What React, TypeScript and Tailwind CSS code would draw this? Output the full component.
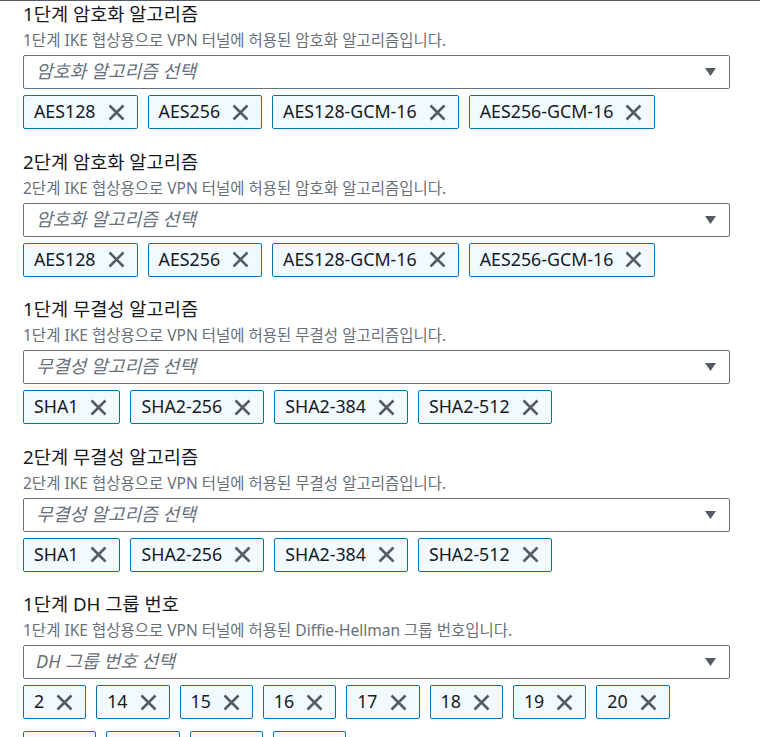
const font = { fontFamily: '"Noto Sans", "Noto Sans CJK KR", sans-serif' }

type Section = {
  title: string
  desc: string
  placeholder: string
  tokens: string[]
}

const sections: Section[] = [
  {
    title: '1단계 암호화 알고리즘',
    desc: '1단계 IKE 협상용으로 VPN 터널에 허용된 암호화 알고리즘입니다.',
    placeholder: '암호화 알고리즘 선택',
    tokens: ['AES128', 'AES256', 'AES128-GCM-16', 'AES256-GCM-16'],
  },
  {
    title: '2단계 암호화 알고리즘',
    desc: '2단계 IKE 협상용으로 VPN 터널에 허용된 암호화 알고리즘입니다.',
    placeholder: '암호화 알고리즘 선택',
    tokens: ['AES128', 'AES256', 'AES128-GCM-16', 'AES256-GCM-16'],
  },
  {
    title: '1단계 무결성 알고리즘',
    desc: '1단계 IKE 협상용으로 VPN 터널에 허용된 무결성 알고리즘입니다.',
    placeholder: '무결성 알고리즘 선택',
    tokens: ['SHA1', 'SHA2-256', 'SHA2-384', 'SHA2-512'],
  },
  {
    title: '2단계 무결성 알고리즘',
    desc: '2단계 IKE 협상용으로 VPN 터널에 허용된 무결성 알고리즘입니다.',
    placeholder: '무결성 알고리즘 선택',
    tokens: ['SHA1', 'SHA2-256', 'SHA2-384', 'SHA2-512'],
  },
  {
    title: '1단계 DH 그룹 번호',
    desc: '1단계 IKE 협상용으로 VPN 터널에 허용된 Diffie-Hellman 그룹 번호입니다.',
    placeholder: 'DH 그룹 번호 선택',
    tokens: ['2', '14', '15', '16', '17', '18', '19', '20', '21', '22', '23', '24'],
  },
]

function CloseIcon() {
  return (
    <svg width="17" height="17" viewBox="0 0 17 17" className="shrink-0">
      <path d="M1.5 1.5L15.5 15.5M15.5 1.5L1.5 15.5" stroke="#545b64" strokeWidth="2.5" fill="none" />
    </svg>
  )
}

function Token({ label }: { label: string }) {
  return (
    <div className="flex h-[34px] items-center gap-[12px] rounded-[2px] border border-[#0073bb] bg-[#f1faff] pl-[10px] pr-[12px]">
      <span className="text-[17.8px] leading-none text-[#16191f]">{label}</span>
      <CloseIcon />
    </div>
  )
}

export default function App() {
  return (
    <div className="min-h-screen bg-white" style={font}>
      <div className="h-px bg-[#545b64]" />
      <div className="flex flex-col gap-[21.5px] pl-[23px] pr-[30px] pt-[2px]">
        {sections.map((s) => (
          <div key={s.title} className="flex flex-col">
            <div className="h-[22px] text-[18.7px] leading-[22px] text-[#16191f]">{s.title}</div>
            <div className="mt-[5px] h-[20px] text-[15.5px] leading-[20px] text-[#687078]">{s.desc}</div>
            <div className="mt-[5px] flex h-[34px] items-center justify-between rounded-[2px] border border-[#687078] pl-[12px] pr-[13px]">
              <span className="text-[18.2px] italic text-[#687078]">{s.placeholder}</span>
              <svg width="11" height="8" viewBox="0 0 11 8">
                <path d="M0 0H11L5.5 8Z" fill="#545b64" />
              </svg>
            </div>
            <div className="mt-[6px] flex flex-wrap gap-x-[10px] gap-y-[12px]">
              {s.tokens.map((t) => (
                <Token key={t} label={t} />
              ))}
            </div>
          </div>
        ))}
      </div>
    </div>
  )
}
